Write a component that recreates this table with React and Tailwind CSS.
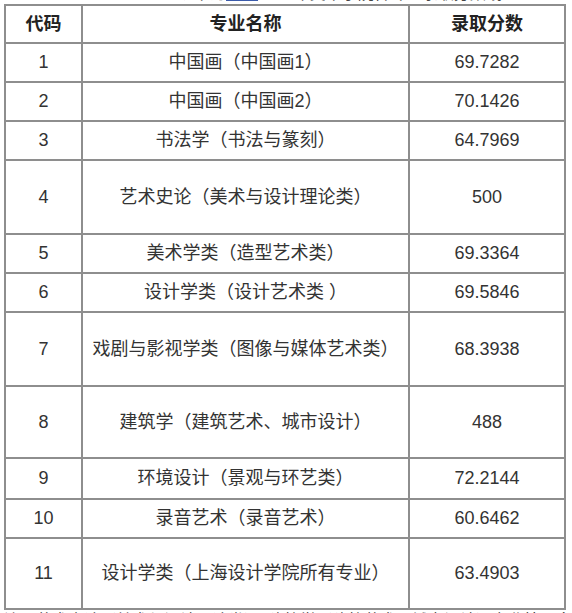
const rows = [
  { code: '1', name: '中国画（中国画1）', score: '69.7282', h: 'h-[39px]' },
  { code: '2', name: '中国画（中国画2）', score: '70.1426', h: 'h-[39px]' },
  { code: '3', name: '书法学（书法与篆刻）', score: '64.7969', h: 'h-[39px]' },
  { code: '4', name: '艺术史论（美术与设计理论类）', score: '500', h: 'h-[74px]' },
  { code: '5', name: '美术学类（造型艺术类）', score: '69.3364', h: 'h-[39px]' },
  { code: '6', name: '设计学类（设计艺术类 ）', score: '69.5846', h: 'h-[39px]' },
  { code: '7', name: '戏剧与影视学类（图像与媒体艺术类）', score: '68.3938', h: 'h-[74px]' },
  { code: '8', name: '建筑学（建筑艺术、城市设计）', score: '488', h: 'h-[72px]' },
  { code: '9', name: '环境设计（景观与环艺类）', score: '72.2144', h: 'h-[41px]' },
  { code: '10', name: '录音艺术（录音艺术）', score: '60.6462', h: 'h-[39px]' },
  { code: '11', name: '设计学类（上海设计学院所有专业）', score: '63.4903', h: 'h-[71px]' },
]

export default function App() {
  return (
    <div
      className="w-[572px] h-[613px] bg-white overflow-hidden text-[#333]"
      style={{ fontFamily: '"Liberation Sans", "Noto Sans CJK SC", sans-serif' }}
    >
      {/* line of text above the table, cut off by the crop */}
      <div className="h-[4px] overflow-hidden">
        <p className="-mt-[15px] pl-[178px] text-[16px] leading-[18px] whitespace-nowrap text-[#444]">
          以下为<span className="text-[#3b5bab] underline">上大</span>2018年美术学院各专业录取分数线
        </p>
      </div>

      <table className="ml-[4px] w-[560px] border-collapse table-fixed text-[18px]">
        <colgroup>
          <col className="w-[77px]" />
          <col className="w-[327px]" />
          <col className="w-[156px]" />
        </colgroup>
        <thead>
          <tr className="h-[38px] font-bold text-[#222]">
            <th className="border-2 border-[#8e8e8e] text-center">代码</th>
            <th className="border-2 border-[#8e8e8e] text-center">专业名称</th>
            <th className="border-2 border-[#8e8e8e] text-center">录取分数</th>
          </tr>
        </thead>
        <tbody>
          {rows.map(r => (
            <tr key={r.code} className={r.h}>
              <td className="border-2 border-[#8e8e8e] text-center">{r.code}</td>
              <td className="border-2 border-[#8e8e8e] text-center whitespace-nowrap">{r.name}</td>
              <td className="border-2 border-[#8e8e8e] text-center">{r.score}</td>
            </tr>
          ))}
        </tbody>
      </table>

      {/* note under the table, cut off by the crop */}
      <p className="pl-[4px] text-[16px] leading-[22px] whitespace-nowrap text-[#222]">
        注：艺术史论（美术与设计理论类）、建筑学（建筑艺术、城市设计）专业按照文化课成绩录取
      </p>
    </div>
  )
}
